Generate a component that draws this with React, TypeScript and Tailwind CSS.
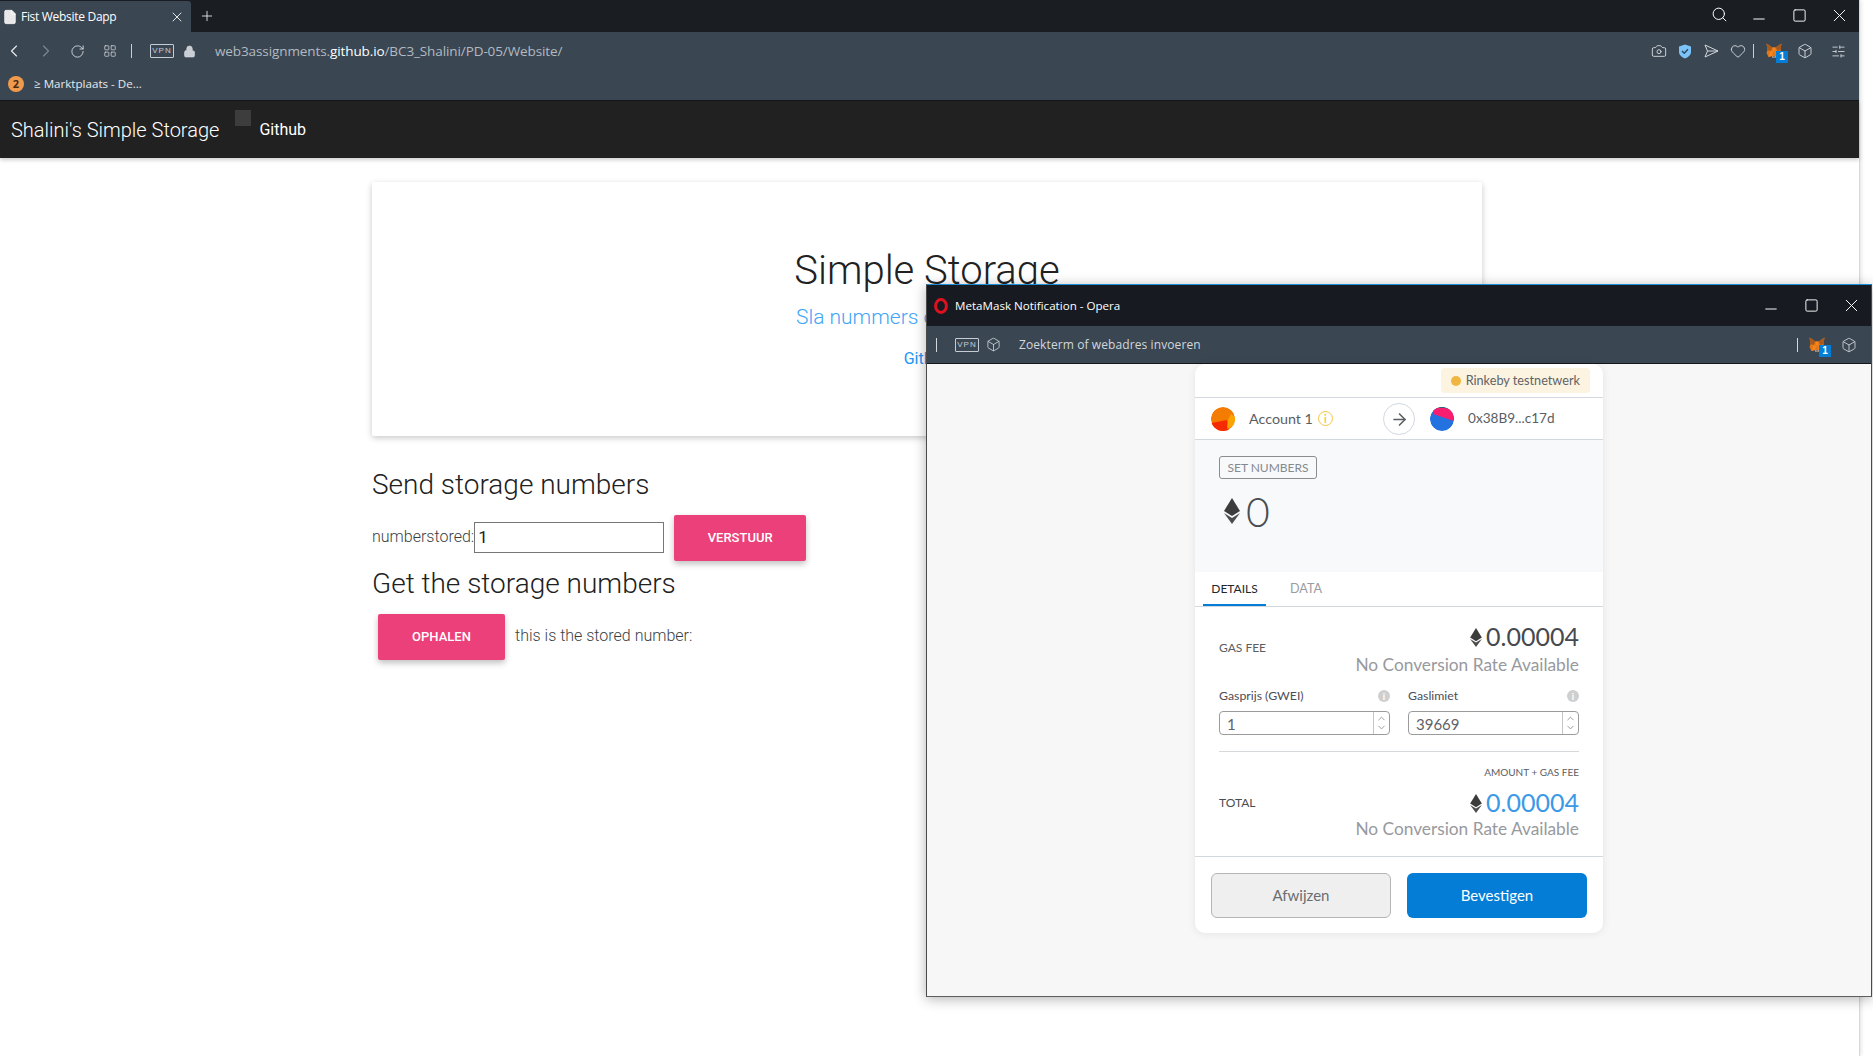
import { Box, Camera, ChevronDown, ChevronLeft, ChevronRight, ChevronUp, File, Heart, LayoutGrid, Lock, Minus, Plus, RotateCw, Search, SlidersHorizontal, Square, X, ArrowRight } from "lucide-react";

function Fox({ size = 16 }: { size?: number }) {
  return (
    <svg width={size} height={size} viewBox="0 0 32 32">
      <polygon points="1,1 13,9 19,9 31,1 29,14 31,20 27,28 20,26 12,26 5,28 1,20 3,14" fill="#e2761b" />
      <polygon points="1,1 13,9 9,16 3,14" fill="#a85a1c" />
      <polygon points="31,1 19,9 23,16 29,14" fill="#a85a1c" />
      <polygon points="9,16 14,17 12,26 5,28" fill="#f6851b" />
      <polygon points="23,16 18,17 20,26 27,28" fill="#f6851b" />
      <polygon points="13,9 19,9 18,17 14,17" fill="#f6851b" />
      <polygon points="12,26 20,26 19,30 13,30" fill="#c0ad9e" />
      <polygon points="14,27 18,27 17,29 15,29" fill="#233447" />
    </svg>
  );
}

function FoxBadge() {
  return (
    <div className="relative w-[16px] h-[16px]">
      <Fox />
      <span className="absolute left-[10px] top-[8px] w-[12px] h-[12px] bg-[#037dd6] text-white text-[10px] leading-[12px] font-bold text-center font-['Liberation_Sans',sans-serif]">1</span>
    </div>
  );
}

function Eth({ w, h }: { w: number; h: number }) {
  return (
    <svg width={w} height={h} viewBox="0 0 16 26">
      <polygon points="8,0 16,13 8,18 0,13" fill="#3c3c3d" />
      <polygon points="0,15 8,20 16,15 8,26" fill="#4d4d4e" />
    </svg>
  );
}

function VpnBadge() {
  return <span className="w-[24px] h-[14px] border border-[#c5ccd3] rounded-[1px] text-[#c5ccd3] text-[8px] leading-[12px] tracking-[1px] text-center font-['Liberation_Sans',sans-serif]">VPN</span>;
}

function WindowControls() {
  return (
    <div className="flex items-center text-white">
      <span className="w-[40px] flex justify-center pt-[7px]"><Minus size={18} strokeWidth={1.3} /></span>
      <span className="w-[40px] flex justify-center"><Square size={15} strokeWidth={1.5} /></span>
      <span className="w-[40px] flex justify-center"><X size={21} strokeWidth={1.1} /></span>
    </div>
  );
}

function GasInput({ label, value }: { label: string; value: string }) {
  return (
    <div className="w-[171px]">
      <div className="flex items-center justify-between h-[18px] text-[12.3px] text-[#4d4d55]">
        <span>{label}</span>
        <span className="w-[12px] h-[12px] rounded-full bg-[#cfcfcf] flex items-center justify-center text-white text-[9px] font-bold leading-none">i</span>
      </div>
      <div className="flex h-[24px] mt-[6px] border border-[#9b9b9b] rounded-[4px] overflow-hidden">
        <div className="flex-1 px-[7px] text-[15px] leading-[24px] text-[#5f6368]">{value}</div>
        <div className="w-[16px] border-l border-[#c4c4c4] flex flex-col items-center justify-center text-[#8a8a8a]">
          <ChevronUp size={11} strokeWidth={1.8} className="-mb-[1px]" />
          <ChevronDown size={11} strokeWidth={1.8} className="-mt-[1px]" />
        </div>
      </div>
    </div>
  );
}

function MetaMaskCard() {
  return (
    <div className="w-[408px] h-[569px] mx-auto bg-white rounded-[10px] shadow-[0_1px_8px_rgba(0,0,0,0.08)] font-['Lato',sans-serif] flex flex-col">
      <div className="h-[34px] flex items-start justify-end pt-[4px] pr-[13px] border-b border-[#d3d8e0]">
        <div className="h-[25px] px-[10px] rounded-[4px] bg-[#fcf3e0] flex items-center gap-[5px] text-[12.7px] text-[#5f6368]">
          <span className="w-[10px] h-[10px] rounded-full bg-[#efb642]" />
          Rinkeby testnetwerk
        </div>
      </div>
      <div className="relative h-[42px] flex items-center border-b border-[#d3d8e0] text-[#5a5e63]">
        <div className="w-[204px] flex items-center pl-[16px] text-[14.3px]">
          <svg width="24" height="24" viewBox="0 0 24 24" className="rounded-full">
            <circle cx="12" cy="12" r="12" fill="#f47c00" />
            <polygon points="0,16 16,13 18,24 0,24" fill="#f52a00" />
            <polygon points="20,7 24,10 24,18 16,22 17,13" fill="#f9a400" />
          </svg>
          <span className="ml-[14px]">Account 1</span>
          <span className="ml-[5px] w-[15px] h-[15px] rounded-full border border-[#f5c644] flex items-center justify-center text-[#f5c644] text-[11px] font-bold leading-none">i</span>
        </div>
        <div className="absolute left-[188px] top-[5px] w-[32px] h-[32px] rounded-full border border-[#d3d8e0] bg-white flex items-center justify-center text-[#5a5e63]">
          <ArrowRight size={19} strokeWidth={2} />
        </div>
        <svg width="24" height="24" viewBox="0 0 24 24" className="ml-[31px] rounded-full">
          <circle cx="12" cy="12" r="12" fill="#2471e0" />
          <polygon points="0,0 24,0 24,3 0,3" fill="#0f6a73" />
          <polygon points="3,0 24,2 24,14 3,7" fill="#f81d6f" />
        </svg>
        <span className="ml-[14px] text-[13.6px]">0x38B9...c17d</span>
      </div>
      <div className="h-[132px] bg-[#f8f9fa] pl-[24px] pt-[16px]">
        <div className="w-[98px] h-[23px] border border-[#8d8d8d] rounded-[3px] text-[12px] leading-[21px] text-center text-[#85898f]">SET NUMBERS</div>
        <div className="flex items-center gap-[6px] mt-[14px] ml-[5px] h-[36px]">
          <Eth w={16} h={26} />
          <span className="text-[41px] leading-none font-light text-[#4a4d52]">0</span>
        </div>
      </div>
      <div className="h-[35px] flex pl-[8px] border-b border-[#d3d8e0] text-[12px]">
        <div className="w-[63px] h-[34px] border-b-2 border-[#037dd6] text-center leading-[34px] text-[#24272a]">DETAILS</div>
        <div className="ml-[15px] w-[50px] text-center text-[12.6px] leading-[34px] text-[#9a9ca1]">DATA</div>
      </div>
      <div className="flex-1 px-[24px]">
        <div className="relative pt-[16px] h-[80px]">
          <span className="absolute left-0 top-[32px] text-[12px] text-[#5a5e63]">GAS FEE</span>
          <div className="flex items-center justify-end gap-[4px] h-[28px] text-[25px] text-[#46494d]">
            <Eth w={12} h={19} />
            <span>0.00004</span>
          </div>
          <div className="text-right text-[17.3px] leading-[20px] mt-[4px] text-[#97999e]">No Conversion Rate Available</div>
        </div>
        <div className="flex justify-between">
          <GasInput label="Gasprijs (GWEI)" value="1" />
          <GasInput label="Gaslimiet" value="39669" />
        </div>
        <div className="h-px bg-[#d6d9dc] mt-[16px]" />
        <div className="text-right text-[10px] leading-[12px] mt-[14px] text-[#5a5e63]">AMOUNT + GAS FEE</div>
        <div className="relative pt-[11px]">
          <span className="absolute left-0 top-[16px] text-[12px] text-[#4a4d52]">TOTAL</span>
          <div className="flex items-center justify-end gap-[4px] h-[28px] text-[25px] text-[#3b99e8]">
            <Eth w={12} h={19} />
            <span>0.00004</span>
          </div>
          <div className="text-right text-[17.3px] leading-[20px] mt-[2px] text-[#97999e]">No Conversion Rate Available</div>
        </div>
      </div>
      <div className="h-[77px] border-t border-[#d3d8e0] flex gap-[16px] px-[16px] pt-[16px] text-[15px]">
        <div className="w-[180px] h-[45px] rounded-[6px] border border-[#b5b5b5] bg-[#efefef] text-[#6a6d71] flex items-center justify-center">Afwijzen</div>
        <div className="w-[180px] h-[45px] rounded-[6px] bg-[#037dd6] text-white flex items-center justify-center">Bevestigen</div>
      </div>
    </div>
  );
}

function PopupWindow() {
  return (
    <div className="absolute left-[926px] top-[284px] w-[946px] h-[713px] flex flex-col border-t border-[#1a8fd8] border-l border-r border-b border-l-[#4a4a4a] border-r-[#4a4a4a] border-b-[#5e5e5e] bg-[#f7f7f7] shadow-[0_2px_12px_rgba(0,0,0,0.3)]">
      <div className="h-[41px] bg-[#171b21] flex items-center pl-[7px] text-white font-['Open_Sans',sans-serif] shrink-0">
        <svg width="14" height="16" viewBox="0 0 14 16">
          <ellipse cx="7" cy="8" rx="5.4" ry="6.4" fill="none" stroke="#e0111f" strokeWidth="3" />
        </svg>
        <span className="ml-[7px] text-[11.6px]">MetaMask Notification - Opera</span>
        <div className="ml-auto"><WindowControls /></div>
      </div>
      <div className="h-[38px] bg-[#3a4652] border-b border-[#14181d] flex items-center text-[#d2d7dc] font-['Open_Sans',sans-serif] shrink-0">
        <span className="ml-[9px] w-px h-[14px] bg-[#d2d7dc]" />
        <span className="ml-[18px] flex"><VpnBadge /></span>
        <Box size={15} strokeWidth={1.3} className="ml-[7px]" />
        <span className="ml-[18px] text-[12px] tracking-[0.1px]">Zoekterm of webadres invoeren</span>
        <span className="ml-auto w-px h-[14px] bg-[#d2d7dc]" />
        <span className="ml-[11px]"><FoxBadge /></span>
        <Box size={16} strokeWidth={1.3} className="ml-[16px] mr-[14px]" />
      </div>
      <MetaMaskCard />
    </div>
  );
}

export default function App() {
  return (
    <div className="relative w-[1873px] h-[1056px] overflow-hidden bg-white">
      <div className="w-[1860px] h-[1056px] bg-white border-r border-[#d8d8d8] shadow-[1px_0_4px_rgba(0,0,0,0.12)] flex flex-col">
        {/* tab strip */}
        <div className="h-[32px] bg-[#1a1e23] flex items-end shrink-0 font-['Open_Sans',sans-serif]">
          <div className="w-[191px] h-[31px] bg-[#3a4652] rounded-tr-[3px] flex items-center pl-[2px] text-white">
            <File size={16} fill="#e8e8e8" strokeWidth={1} />
            <span className="ml-[3px] text-[12px] tracking-[-0.3px]">Fist Website Dapp</span>
            <X size={16} strokeWidth={1.3} className="ml-auto mr-[6px]" />
          </div>
          <Plus size={16} strokeWidth={1.2} className="ml-[8px] mb-[8px] text-white" />
          <div className="ml-auto flex items-center text-white self-start mt-[3px]">
            <span className="w-[40px] flex justify-center -mt-[2px]"><Search size={17} strokeWidth={1.4} /></span>
            <WindowControls />
          </div>
        </div>
        {/* address bar */}
        <div className="h-[38px] bg-[#3a4652] flex items-center text-[#d3d8dc] shrink-0 font-['Open_Sans',sans-serif]">
          <ChevronLeft size={20} strokeWidth={1.4} className="ml-[4px] text-[#e6e9ec]" />
          <ChevronRight size={20} strokeWidth={1.4} className="ml-[12px] text-[#7c8792]" />
          <RotateCw size={15} strokeWidth={1.5} className="ml-[14px]" />
          <LayoutGrid size={14} strokeWidth={1.3} className="ml-[18px]" />
          <span className="ml-[14px] w-px h-[14px] bg-[#c9ced4]" />
          <span className="ml-[18px] flex"><VpnBadge /></span>
          <Lock size={13} fill="#c9ced4" strokeWidth={1.4} className="ml-[9px]" />
          <span className="ml-[19px] text-[13.5px] tracking-[-0.1px] text-[#b3bac1]">
            web3assignments.<span className="text-white">github.io</span>/BC3_Shalini/PD-05/Website/
          </span>
          <div className="ml-auto flex items-center">
            <Camera size={16} strokeWidth={1.4} />
            <svg width="14" height="15" viewBox="0 0 14 15" className="ml-[11px]">
              <path d="M7 0.5 L13 2.5 V8 C13 11 10 13.5 7 14.5 C4 13.5 1 11 1 8 V2.5 Z" fill="#7cc4f8" />
              <path d="M4 7 L6.2 9.2 L10 5.2" fill="none" stroke="#2c4a66" strokeWidth="1.5" />
            </svg>
            <svg width="15" height="14" viewBox="0 0 15 14" className="ml-[12px]">
              <path d="M1 1 L14 7 L1 13 L3.5 7 Z M3.5 7 H14" fill="none" stroke="currentColor" strokeWidth="1" />
            </svg>
            <Heart size={16} strokeWidth={1.4} className="ml-[11px]" />
            <span className="ml-[7px] w-px h-[14px] bg-[#c9ced4]" />
            <span className="ml-[12px]"><FoxBadge /></span>
            <Box size={16} strokeWidth={1.4} className="ml-[15px]" />
            <SlidersHorizontal size={15} strokeWidth={1.4} className="ml-[18px] mr-[13px]" />
          </div>
        </div>
        {/* bookmarks */}
        <div className="h-[31px] pb-[2px] bg-[#3a4652] border-b border-[#14181d] flex items-center pl-[8px] text-[#e6e9ec] shrink-0 font-['Open_Sans',sans-serif]">
          <span className="w-[16px] h-[16px] rounded-full bg-[#ef9a4d] text-[#4b2a10] text-[11px] leading-[16px] text-center font-bold">2</span>
          <span className="ml-[10px] text-[11.6px]">≥ Marktplaats - De...</span>
        </div>
        {/* page */}
        <div className="flex-1 font-['Roboto',sans-serif] font-light text-[#3b3f44]">
          <nav className="h-[57px] bg-[#212121] flex text-white shadow-[0_2px_4px_rgba(0,0,0,0.2)]">
            <span className="ml-[11px] mt-[14px] text-[20px] leading-[30px]">Shalini's Simple Storage</span>
            <span className="ml-[16px] mt-[9px] w-[16px] h-[16px] bg-[#3d3d3d]" />
            <span className="ml-[8px] mt-[17px] text-[16px] leading-[24px] font-normal">Github</span>
          </nav>
          <div className="ml-[372px] w-[1110px]">
            <div className="mt-[24px] h-[254px] bg-white shadow-[0_2px_6px_rgba(0,0,0,0.22)] rounded-[2px] text-center pt-[63px]">
              <h1 className="text-[40px] leading-[52px] text-[#212121]">Simple Storage</h1>
              <p className="text-[21px] leading-[28px] mt-[6px] pr-[7px] text-[#42a5f5]">Sla nummers op blockchain</p>
              <p className="text-[16px] leading-[22px] mt-[17px] font-normal text-[#2196f3]">Github</p>
            </div>
            <h2 className="mt-[30px] text-[28px] leading-[38px] text-[#212121]">Send storage numbers</h2>
            <div className="flex items-center mt-[11px] h-[46px]">
              <span className="text-[16px] -mt-[2px]">numberstored:</span>
              <div className="w-[190px] h-[31px] -mt-[1px] border border-[#767676] px-[3px] text-[17px] leading-[28px] font-normal text-[#222]">1</div>
              <div className="ml-[10px] w-[132px] h-[46px] bg-[#ec407a] rounded-[2px] shadow-[0_3px_6px_rgba(0,0,0,0.25)] text-white text-[13px] font-medium flex items-center justify-center">VERSTUUR</div>
            </div>
            <h2 className="mt-[4px] text-[28px] leading-[38px] text-[#212121]">Get the storage numbers</h2>
            <div className="flex items-center mt-[11px] ml-[6px] h-[46px]">
              <div className="w-[127px] h-[46px] bg-[#ec407a] rounded-[2px] shadow-[0_3px_6px_rgba(0,0,0,0.25)] text-white text-[13px] font-medium flex items-center justify-center">OPHALEN</div>
              <span className="ml-[10px] text-[16px] -mt-[2px]">this is the stored number:</span>
            </div>
          </div>
        </div>
      </div>
      <PopupWindow />
    </div>
  );
}
